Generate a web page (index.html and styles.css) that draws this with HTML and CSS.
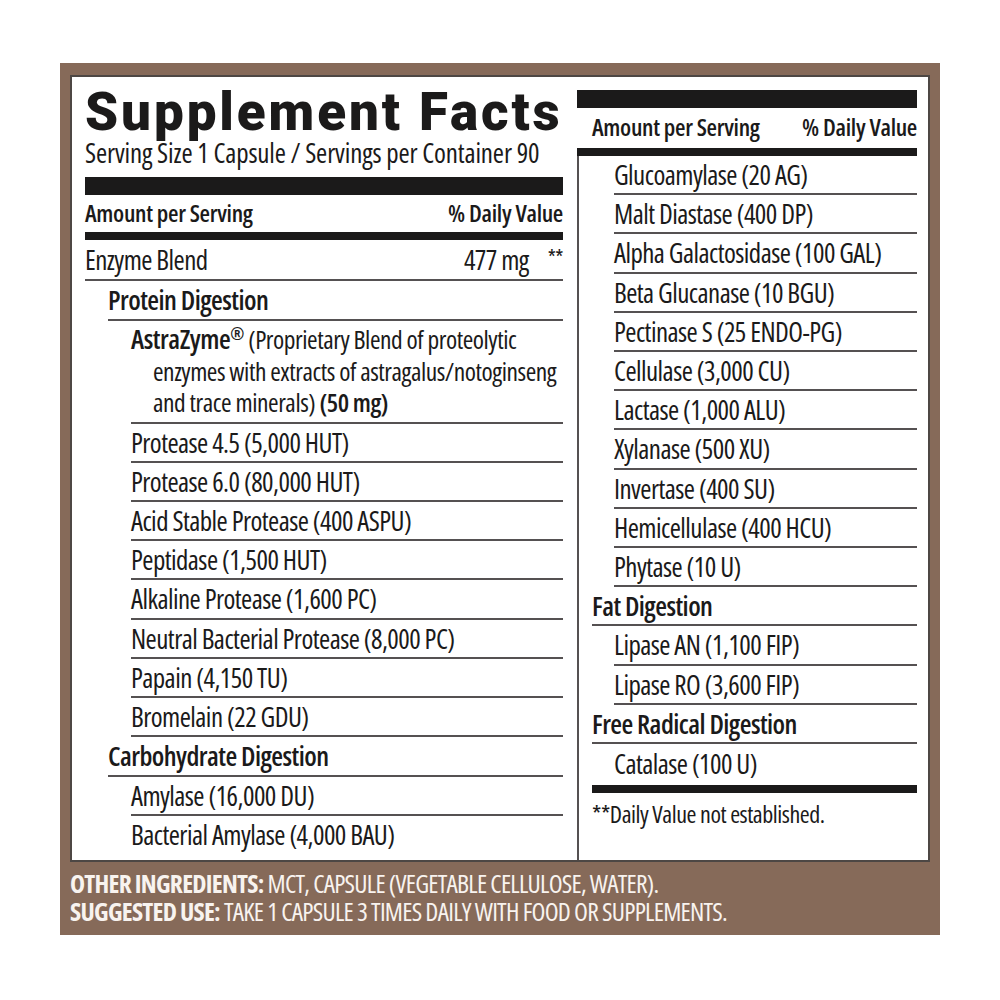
FILE: index.html
```html
<!DOCTYPE html>
<html lang="en">
<head>
<meta charset="utf-8">
<title>Supplement Facts</title>
<link rel="stylesheet" href="styles.css">
</head>
<body>
<div class="frame">
  <div class="panel">
    <div class="lcol">
      <h1 class="title">Supplement Facts</h1>
      <div class="serving">Serving Size 1 Capsule / Servings per Container 90</div>
      <div class="bar-thick"></div>
      <div class="hdr"><span>Amount per Serving</span><span>% Daily Value</span></div>
      <div class="bar"></div>
      <div class="row l0 first"><span class="grow">Enzyme Blend</span><span class="amt">477 mg</span><span class="ast">**</span></div>
      <div class="row l1 sec">Protein Digestion</div>
      <div class="row l2 astra"><span class="b">AstraZyme<sup>®</sup></span> (Proprietary Blend of proteolytic<br>enzymes with extracts of astragalus/notoginseng<br>and trace minerals) <span class="b">(50 mg)</span></div>
      <div class="row l2">Protease 4.5 (5,000 HUT)</div>
      <div class="row l2">Protease 6.0 (80,000 HUT)</div>
      <div class="row l2">Acid Stable Protease (400 ASPU)</div>
      <div class="row l2">Peptidase (1,500 HUT)</div>
      <div class="row l2">Alkaline Protease (1,600 PC)</div>
      <div class="row l2">Neutral Bacterial Protease (8,000 PC)</div>
      <div class="row l2">Papain (4,150 TU)</div>
      <div class="row l2">Bromelain (22 GDU)</div>
      <div class="row l1 sec">Carbohydrate Digestion</div>
      <div class="row l2">Amylase (16,000 DU)</div>
      <div class="row l2 last">Bacterial Amylase (4,000 BAU)</div>
    </div>
    <div class="rcol">
      <div class="bar-thick"></div>
      <div class="hdr rhdr"><span>Amount per Serving</span><span>% Daily Value</span></div>
      <div class="bar"></div>
      <div class="rbody">
        <div class="row r1">Glucoamylase (20 AG)</div>
        <div class="row r1">Malt Diastase (400 DP)</div>
        <div class="row r1">Alpha Galactosidase (100 GAL)</div>
        <div class="row r1">Beta Glucanase (10 BGU)</div>
        <div class="row r1">Pectinase S (25 ENDO-PG)</div>
        <div class="row r1">Cellulase (3,000 CU)</div>
        <div class="row r1">Lactase (1,000 ALU)</div>
        <div class="row r1">Xylanase (500 XU)</div>
        <div class="row r1">Invertase (400 SU)</div>
        <div class="row r1">Hemicellulase (400 HCU)</div>
        <div class="row r1">Phytase (10 U)</div>
        <div class="row r0 sec">Fat Digestion</div>
        <div class="row r1">Lipase AN (1,100 FIP)</div>
        <div class="row r1">Lipase RO (3,600 FIP)</div>
        <div class="row r0 sec">Free Radical Digestion</div>
        <div class="row r1 last">Catalase (100 U)</div>
        <div class="bar"></div>
        <div class="note">**Daily Value not established.</div>
      </div>
    </div>
  </div>
  <div class="footer">
    <div><span class="fb">OTHER INGREDIENTS:</span> MCT, CAPSULE (VEGETABLE CELLULOSE, WATER).</div>
    <div><span class="fb">SUGGESTED USE:</span> TAKE 1 CAPSULE 3 TIMES DAILY WITH FOOD OR SUPPLEMENTS.</div>
  </div>
</div>
</body>
</html>
```
FILE: styles.css
```css
html, body {
  margin: 0;
  padding: 0;
  background: #ffffff;
}

body {
  font-family: "Open Sans", "Liberation Sans", sans-serif;
  font-stretch: 75%;
  color: #1b1a1a;
}

.frame {
  margin: 63px 0 0 60px;
  width: 880px;
  height: 872px;
  box-sizing: border-box;
  background: #866a59;
  padding: 12px 10px 0 10px;
}

.panel {
  height: 787px;
  box-sizing: border-box;
  background: #ffffff;
  border: 2px solid #4d4744;
  display: flex;
  padding: 0 11px 0 13px;
  gap: 14px;
}

.lcol {
  width: 478px;
  flex: none;
  display: flex;
  flex-direction: column;
}

.title {
  margin: 12px 0 0 0;
  height: 49px;
  font-family: "Roboto", "Liberation Sans", sans-serif;
  font-stretch: 100%;
  font-weight: 900;
  font-size: 53px;
  line-height: 46px;
  letter-spacing: 2.9px;
  white-space: nowrap;
  color: #1b1a1a;
}

.serving {
  font-size: 27px;
  line-height: 30px;
  letter-spacing: -0.15px;
  white-space: nowrap;
}

.bar-thick {
  height: 18px;
  background: #1b1a1a;
}

.lcol .bar-thick {
  margin-top: 9px;
}

.bar {
  height: 8px;
  background: #1b1a1a;
}

.hdr {
  display: flex;
  justify-content: space-between;
  font-size: 24px;
  font-weight: 650;
  line-height: 35px;
  padding-bottom: 2px;
  letter-spacing: -0.3px;
}

.row {
  font-size: 27px;
  font-weight: 500;
  line-height: 37.2px;
  letter-spacing: -0.55px;
  border-bottom: 2px solid #555152;
  white-space: nowrap;
}

.row.last {
  border-bottom: none;
}

.first {
  display: flex;
  align-items: flex-start;
  line-height: 39px;
}

.grow {
  flex: 1;
}

.amt {
  margin-right: 19px;
}

.ast {
  font-size: 21px;
  line-height: 24px;
  margin-top: 5px;
}

.sec {
  font-weight: 560;
}

.l1.sec {
  line-height: 38px;
}

.l0 { margin-left: 0; }
.l1 { margin-left: 23px; }
.l2 { margin-left: 46px; }

.astra {
  font-size: 25.5px;
  letter-spacing: -0.45px;
  line-height: 31.5px;
  padding: 2px 0 3px 22px;
  text-indent: -22px;
}

.astra .b {
  font-weight: 650;
}

.astra .b:first-child {
  font-size: 27px;
}

.astra sup {
  font-size: 17px;
  line-height: 0;
  vertical-align: 9px;
}

.rcol {
  flex: 1;
  display: flex;
  flex-direction: column;
  padding-top: 13px;
}

.rhdr {
  padding-left: 15px;
  line-height: 38px;
}

.rbody {
  flex: 1;
  border-left: 2px solid #555152;
  padding-left: 13px;
  display: flex;
  flex-direction: column;
}

.r0 { margin-left: 0; }
.r1 { margin-left: 22px; }

.rbody .row.last {
  line-height: 39px;
  margin-bottom: 2px;
}

.note {
  margin-top: 6px;
  font-size: 24px;
  font-weight: 500;
  line-height: 30px;
  letter-spacing: -0.45px;
}

.footer {
  padding-top: 7px;
  color: #f8f3ef;
  font-size: 25.5px;
  font-weight: 500;
  line-height: 28px;
  letter-spacing: -0.75px;
  white-space: nowrap;
}

.fb {
  font-weight: 700;
}
```
